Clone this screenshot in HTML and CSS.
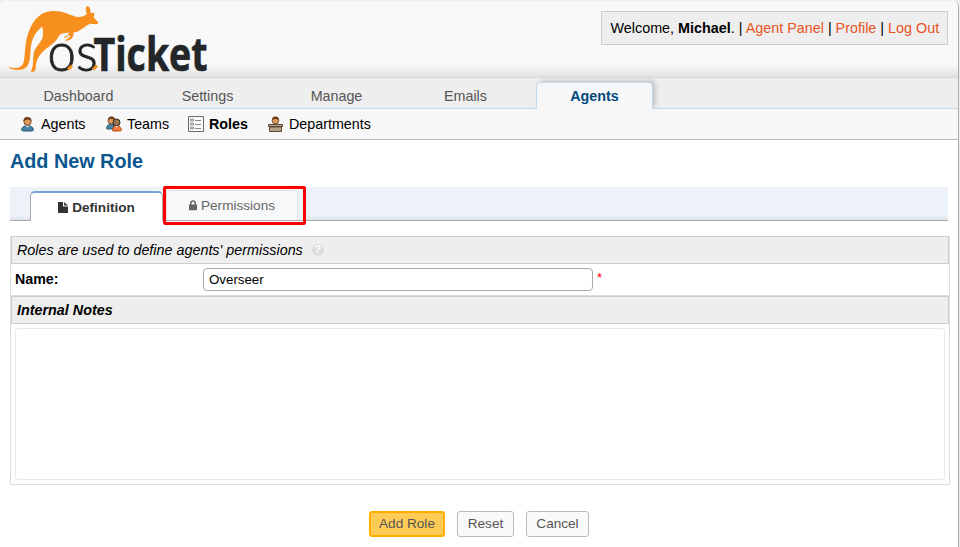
FILE: index.html
```html
<!DOCTYPE html>
<html lang="en">
<head>
<meta charset="utf-8">
<title>osTicket :: Add New Role</title>
<link rel="stylesheet" href="styles.css">
</head>
<body>
<div class="container">
  <header class="header">
    <svg class="logo" width="210" height="76" viewBox="0 0 210 76" role="img" aria-label="osTicket">
      <text class="logo-thin" x="47.500" y="70.500" textLength="50" lengthAdjust="spacingAndGlyphs">os</text>
      <text class="logo-bold" x="93.500" y="70.500" textLength="114" lengthAdjust="spacingAndGlyphs">Ticket</text>
      <path fill="#f78f1e" transform="scale(.3333)" d="M27 202C48 206 61 205 69 192C77 174 73 132 83 105C94 70 113 39 150 34C182 29 203 43 228 50C242 53 251 49 261 42C256 31 256 20 263 18C269 18 272 29 272 40Q281 36 283 40Q284 46 281 52L293 65Q297 70 290 73L271 71C261 73 255 82 244 88Q234 97 221 97L220 107Q216 117 208 120L199 123Q193 120 202 117L211 109L209 106L196 113Q188 114 194 110L203 106L208 98Q184 97 177 107C167 131 139 142 125 159C112 173 107 188 107 204Q108 213 98 216Q88 215 95 209C101 195 98 174 102 156C106 143 123 127 128 112Q131 91 126 80C108 93 95 117 92 145C90 171 91 194 75 205C59 214 37 209 27 204Z"/>
      <path stroke="#f78f1e" stroke-width="3" d="M68 69.500l4-4M93 69.500l4-4"/>
    </svg>
    <p class="info">Welcome, <strong>Michael</strong>. | <a>Agent Panel</a> | <a>Profile</a> | <a>Log Out</a></p>
  </header>
  <nav class="nav">
    <a>Dashboard</a><a>Settings</a><a>Manage</a><a>Emails</a><a class="active">Agents</a>
  </nav>
  <nav class="sub-nav">
    <a class="s-agents"><svg width="16" height="16" viewBox="0 0 16 16"><path d="M1.500 14q0-3 3.500-4h5q3.500 1 3.500 4l-1 1h-10z" fill="#4685a8" stroke="#315d76"/><circle cx="7.500" cy="5.500" r="3.700" fill="#dc9b5b" stroke="#84502c"/><path d="M3.500 5q0-4 4-4t4 4q-2-2-4-1.500T3.500 5" fill="#70401e"/><path d="M6 10l1.500 1.500L9 10" fill="#fff"/></svg>Agents</a>
    <a class="s-teams"><svg width="16" height="16" viewBox="0 0 16 16"><path d="M.5 12q0-3 4-4h3v5H1z" fill="#4685a8" stroke="#315d76"/><circle cx="5.500" cy="4.500" r="3.500" fill="#dc9b5b" stroke="#84502c"/><path d="M2 4q0-3.500 3.500-3.500T9 4Q5 2 2 4" fill="#70401e"/><path d="M6.500 14q0-3 2.500-4h3.500q2.500 1 3 4l-1 1H7z" fill="#f57c3a" stroke="#bd4a19"/><circle cx="10.500" cy="6.500" r="3.500" fill="#9a7453" stroke="#30261f"/><path d="M9 10l1.500 1.500L12 10" fill="#fff"/></svg>Teams</a>
    <a class="s-roles active"><svg width="16" height="16" viewBox="0 0 16 16"><path d="M.5.5h15v15H.5z" fill="#fafafa" stroke="#696969"/><path d="M2.500 3h3v2h-3zM2.500 7h3v2h-3zM2.500 11h3v2h-3z" fill="#ddd" stroke="#777" stroke-width=".7"/><path d="M7 4.500h6M7 8.500h6M7 12.500h6" stroke="#888"/></svg>Roles</a>
    <a class="s-dept"><svg width="16" height="16" viewBox="0 0 16 16"><path d="M3 10q0-2 3-3h3q3 1 3 3" fill="#4685a8"/><circle cx="7.500" cy="4.500" r="3.300" fill="#dc9b5b" stroke="#84502c"/><path d="M4 4q0-3.500 3.500-3.500T11 4Q7 2 4 4" fill="#70401e"/><path d="M1.500 11h12v4.500h-12z" fill="#b8a28a" stroke="#5c4b3c"/><path d="M.5 8.500h14v2H.5z" fill="#b8a28a" stroke="#5c4b3c"/></svg>Departments</a>
  </nav>
  <main class="content">
    <h1>Add New Role</h1>
    <div class="tabs">
      <a class="tab current"><svg width="10" height="11" viewBox="0 0 9 11" preserveAspectRatio="none"><path fill="#333" d="M0 0h4.500v4.500H9V11H0zM5.500 0L9 3.500H5.500z"/></svg>Definition</a>
      <div class="highlight"><a class="tab"><svg width="8" height="11" viewBox="0 0 8 11"><path d="M1.800 5V3.200a2.200 2.200 0 0 1 4.400 0V5" fill="none" stroke="#666" stroke-width="1.500"/><path d="M0 4.500h8v5.700H0z" fill="#666"/></svg>Permissions</a></div>
    </div>
    <section class="form">
      <div class="form-head"><em>Roles are used to define agents' permissions</em><span class="help">?</span></div>
      <div class="row"><label for="name">Name:</label><input id="name" type="text" value="Overseer"><span class="error">*</span></div>
      <div class="form-head notes-head"><em>Internal Notes</em></div>
      <div class="notes"></div>
    </section>
    <div class="buttons"><button class="save">Add Role</button><button>Reset</button><button>Cancel</button></div>
  </main>
</div>
</body>
</html>
```
FILE: styles.css
```css
* { box-sizing: border-box; }
body {
  margin: 0;
  height: 547px;
  overflow: hidden;
  background: #eee;
  font: 14px/16px "Liberation Sans", Arial, sans-serif;
  color: #000;
}
.container {
  width: 959px;
  height: 546px;
  margin-top: 1px;
  background: #fff;
  border-right: 1px solid #aaa;
  border-radius: 6px 6px 0 0;
  overflow: hidden;
}
.header {
  display: flex;
  justify-content: space-between;
  height: 77px;
  background: linear-gradient(#f8f8f8 0, #f8f8f8 63px, #e2e2e2 76px);
  border-bottom: 1px solid #d6d6d6;
}
.logo { display: block; margin-top: -1px; overflow: visible; }
.logo-thin { font: 300 54px Lato, sans-serif; fill: #222628; stroke: #222628; stroke-width: .9px; }
.logo-bold { font: 700 47px "Open Sans", sans-serif; fill: #222628; stroke: #222628; stroke-width: .7px; }
.info {
  width: 347px;
  height: 34px;
  margin: 10px 10px 0 0;
  padding: 8px 0 0 8.5px;
  border: 1px solid #ccc;
  background: #eee;
  font-size: 14.37px;
  white-space: nowrap;
}
.info a { color: #e65524; }
.nav {
  display: flex;
  height: 31px;
  padding: 4px 0 0 20px;
  background: #eee;
  border-bottom: 1px solid #c5d9ec;
}
.nav a {
  width: 117px;
  height: 27px;
  margin-right: 12px;
  padding-top: 6px;
  text-align: center;
  font-size: 14.3px;
  color: #555;
}
.nav .active {
  padding-top: 5px;
  background: #f7f7f7;
  border: 1px solid #c5d9ec;
  border-bottom: 0;
  border-radius: 5px 5px 0 0;
  box-shadow: 3px -2px 5px -1px #bbb;
  clip-path: inset(-6px -8px 0 -6px);
  color: #004a80;
  font-weight: bold;
}
.sub-nav {
  display: flex;
  height: 31px;
  padding: 7px 0 0 20px;
  background: #f7f7f7;
  border-bottom: 1px solid #bbb;
  font-size: 14.3px;
}
.sub-nav a { display: flex; gap: 5px; white-space: nowrap; }
.s-agents { width: 86px; }
.s-teams { width: 82px; }
.s-roles { width: 80px; }
.sub-nav .active { font-weight: bold; }
.content { padding: 9px 8px 0 10px; }
h1 { margin: 0; height: 38px; font-size: 19.8px; line-height: 24px; color: #0a568e; }
.tabs {
  display: flex;
  height: 34px;
  margin-right: 2px;
  padding-left: 20px;
  background: linear-gradient(#edf2f8 28px, #e0e5eb);
  border-bottom: 1px solid #aaa;
}
.tab {
  display: flex;
  align-items: center;
  justify-content: center;
  gap: 4px;
  color: #666;
  font-size: 13.6px;
}
.tab svg { flex: none; }
.current {
  width: 133px;
  height: 30px;
  margin-top: 4px;
  padding-top: 1px;
  background: #fff;
  border: solid #aaa;
  border-width: 2px 1px 0;
  border-top-color: #7ba3d8;
  border-radius: 5px 5px 0 0;
  color: #333;
  font-weight: bold;
}
.highlight {
  width: 143px;
  height: 39px;
  margin-top: -1px;
  border: 3px solid #f00;
  border-radius: 2px;
  background: linear-gradient(#aaa, #aaa) 0 31px / 100% 1px no-repeat, linear-gradient(#edf2f8 0 31px, #fff 31px);
}
.highlight .tab {
  width: 132px;
  height: 30px;
  margin-top: 1px;
  background: #f7f8fa;
  border: 1px solid #e2e5ea;
  border-bottom: 0;
  border-radius: 5px 5px 0 0;
}
.form {
  width: 940px;
  height: 249px;
  margin-top: 15px;
  border: 1px solid #ddd;
  border-top: 0;
}
.form-head {
  display: flex;
  align-items: center;
  width: 938px;
  height: 28px;
  padding-left: 5px;
  border: 1px solid #ccc;
  background: #eee;
  font-size: 14.35px;
}
.notes-head { font-weight: bold; }
.help {
  width: 12px;
  height: 12px;
  margin-left: 9px;
  border-radius: 50%;
  background: #ddd;
  color: #fff;
  font: bold 10px/12px "Liberation Sans", sans-serif;
  text-align: center;
}
.row {
  display: flex;
  height: 32px;
  padding: 4px 0 0 4px;
  border-bottom: 1px solid #ddd;
}
.row label { width: 188px; padding-top: 3px; font-size: 14.2px; font-weight: bold; }
.row input {
  width: 390px;
  height: 23px;
  padding: 0 5px;
  border: 1px solid #aaa;
  border-radius: 4px;
  background: #fff;
  font: 13.3px "Liberation Sans", Arial, sans-serif;
}
.error { margin: 2px 0 0 4px; color: #f00; font-size: 13px; }
.notes {
  height: 152px;
  margin: 4px;
  border: 1px solid #eaeaea;
  border-radius: 3px;
}
.buttons { display: flex; gap: 12px; margin: 26px 0 0 359px; }
.buttons button {
  width: 57px;
  height: 26px;
  padding: 0 0 1px;
  border: 1px solid #bbb;
  border-radius: 3px;
  background: #fafafa;
  color: #555;
  font: 13.6px "Liberation Sans", Arial, sans-serif;
}
.buttons button:last-child { width: 63px; }
.buttons .save { width: 76px; border: 2px solid #ffae00; background: #ffcb57; }
```
